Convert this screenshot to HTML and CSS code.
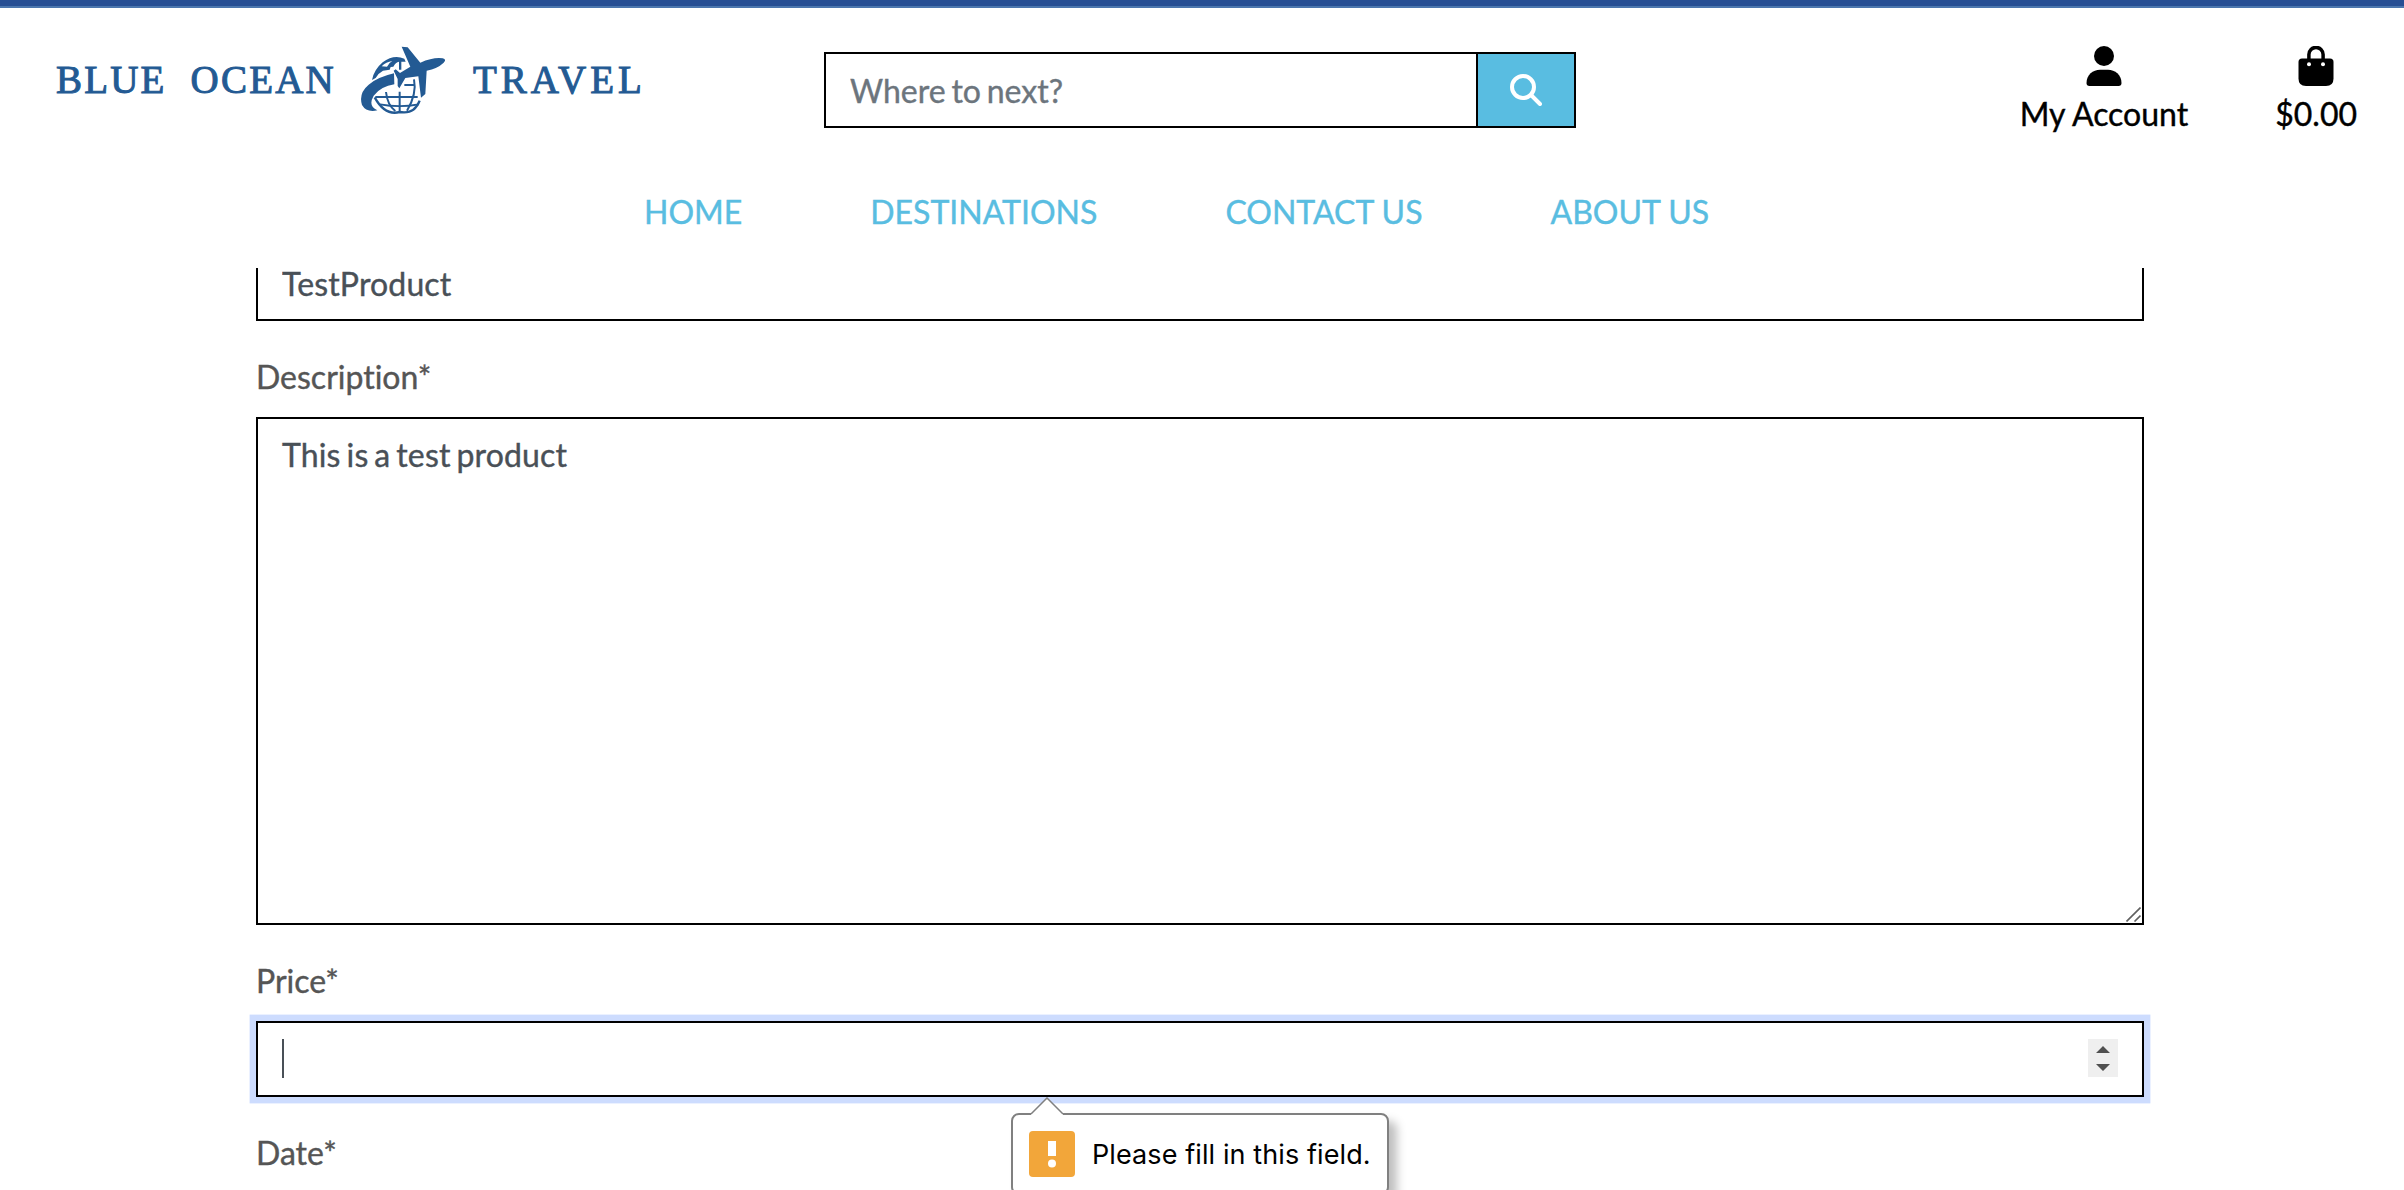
FILE: index.html
```
<!DOCTYPE html>
<html lang="en">
<head>
<meta charset="utf-8">
<title>Blue Ocean Travel</title>
<link rel="stylesheet" href="styles.css">
</head>
<body>
<header class="header">
  <div class="topbar">
    <a class="logo">
      <span class="logo-text logo-first">BLUE OCEAN</span>
      <svg class="logo-icon" viewBox="30 30 258 204" fill="#235a93">
        <path d="M155 32L173 34L211 80Q250 63 278 67Q291 70 281 80Q262 98 230 104L226 174L213 185L205 121L166 126L148 157L143 150L143 129L131 104L137 100L150 111L181 92Z"/>
        <path d="M66 132Q72 101 98 79Q131 54 163 68L167 77L154 77L154 101L147 101L147 77Q137 79 130 92L122 93L119 101L99 104Q84 112 77 126Z"/>
        <path d="M95 91L111 92Q117 80 127 75Q108 78 95 91Z" fill="#fff"/>
        <path d="M132 112L133 145Q93 151 71 179Q53 211 82 223Q49 230 36 207Q25 172 56 146Q84 123 132 112Z"/>
        <path d="M163 147H195M192 130Q201 174 171 224M76 183H203M108 168Q112 207 136 225M149 167V227" fill="none" stroke="#235a93" stroke-width="6"/>
        <path d="M74 184Q105 240 149 228Q193 236 209 194" fill="none" stroke="#235a93" stroke-width="7"/>
        <path d="M90 205Q149 216 206 205" fill="none" stroke="#235a93" stroke-width="5"/>
      </svg>
      <span class="logo-text logo-second">TRAVEL</span>
    </a>
    <form class="search">
      <input class="search-input" type="text" placeholder="Where to next?">
      <button class="search-button" type="button" aria-label="Search">
        <svg width="32" height="32" viewBox="0 0 32 32" fill="none" stroke="#fff" stroke-width="4" stroke-linecap="round"><circle cx="13" cy="13" r="11"/><path d="M21 21L30 30"/></svg>
      </button>
    </form>
    <div class="actions">
      <a class="action">
        <svg width="36" height="40" viewBox="0 0 36 40"><circle cx="18" cy="10" r="10"/><path d="M0.5 37C0.5 29 7 23.8 14 23.8H22C29 23.8 35.5 29 35.5 37Q35.5 40 32.5 40H3.5Q0.5 40 0.5 37Z"/></svg>
        <span>My Account</span>
      </a>
      <a class="action">
        <svg width="36" height="40" viewBox="0 0 36 40"><path d="M10.9 14V8.5A7.1 7.1 0 0 1 25.100 8.500V14" fill="none" stroke="#000" stroke-width="3.5"/><path d="M4 12.500H32Q35.500 12.500 35.500 16V32.500Q35.500 40 28 40H8Q0.500 40 0.500 32.500V16Q0.500 12.500 4 12.500Z"/><circle cx="11" cy="18.200" r="2" fill="#fff"/><circle cx="25" cy="18.200" r="2" fill="#fff"/></svg>
        <span>$0.00</span>
      </a>
    </div>
  </div>
  <nav class="nav">
    <a>HOME</a>
    <a>DESTINATIONS</a>
    <a>CONTACT US</a>
    <a>ABOUT US</a>
  </nav>
</header>
<main class="content">
  <form class="product-form">
    <input class="field" type="text" value="TestProduct">
    <label class="label">Description*</label>
    <div class="area-wrap">
      <textarea class="field area">This is a test product</textarea>
      <svg class="grip" width="15" height="15" viewBox="0 0 15 15" stroke="#606060" stroke-width="1.6"><path d="M0.500 14.500L14.500 0.500M8.500 14.500L14.500 8.500"/></svg>
    </div>
    <label class="label">Price*</label>
    <div class="field price">
      <span class="caret"></span>
      <svg class="spinner" width="30" height="38" viewBox="0 0 30 38"><path d="M0 0H30V38H0Z" fill="#efefef"/><path d="M8 14L15 7L22 14ZM8 25H22L15 32Z" fill="#505050"/></svg>
      <div class="tooltip">
        <svg class="tooltip-arrow" width="34" height="19" viewBox="0 0 34 19"><path d="M1 17L17 1L33 17V19H1Z" fill="#fff"/><path d="M1 17L17 1L33 17" fill="none" stroke="#808080" stroke-width="1.500"/></svg>
        <svg width="46" height="46" viewBox="0 0 46 46"><rect width="46" height="46" rx="4" fill="#f2a63a"/><path d="M19 10H27V25H19Z" fill="#fff"/><circle cx="23" cy="32.500" r="4" fill="#fff"/></svg>
        <span class="tooltip-text">Please fill in this field.</span>
      </div>
    </div>
    <label class="label">Date*</label>
  </form>
</main>
</body>
</html>
```
FILE: styles.css
```
* { box-sizing: border-box; }

body {
  margin: 0;
  height: 1190px;
  overflow: hidden;
  background: #fff;
  color: #555;
  font: 32px/48px Lato, sans-serif;
  font-variant-ligatures: none;
  -webkit-text-stroke: 0.4px currentColor;
}

.header {
  height: 268px;
  border-top: 6px solid #274f94;
}

.topbar {
  display: grid;
  grid-template-columns: 824px 752px 1fr;
  align-items: start;
  height: 158px;
  border-top: 2px solid #4c77ae;
}

.logo {
  display: flex;
  align-items: center;
  height: 70px;
  margin: 37px 0 0 56px;
  color: #235a93;
}

.logo-text {
  font: 39px/48px "Liberation Serif", serif;
  letter-spacing: 2.2px;
  word-spacing: 12px;
  white-space: nowrap;
  -webkit-text-stroke: 1px currentColor;
}

.logo-first { width: 304px; }
.logo-second { margin-left: 27px; letter-spacing: 4px; }

.logo-icon {
  width: 86px;
  height: 68px;
}

.search {
  display: flex;
  height: 76px;
  margin-top: 44px;
  border: 2px solid #000;
}

.search-input {
  flex: 1;
  min-width: 0;
  padding: 2px 24px 0;
  border: 0;
  border-right: 2px solid #000;
  outline: 0;
  background: #fff;
  font: inherit;
  word-spacing: -2.4px;
}

.search-input::placeholder { color: #6c757d; opacity: 1; }

.search-button {
  display: flex;
  align-items: center;
  justify-content: center;
  width: 96px;
  padding: 0;
  border: 0;
  background: #59bde1;
}

.actions {
  display: flex;
  justify-content: flex-end;
  gap: 87px;
  padding: 38px 47px 0 0;
  color: #000;
}

.action {
  display: flex;
  flex-direction: column;
  align-items: center;
  gap: 4px;
}

.nav {
  display: flex;
  gap: 128px;
  padding: 24px 0 0 644px;
  color: #59bde1;
}

.content {
  height: 922px;
  overflow: hidden;
}

.product-form {
  display: flex;
  flex-direction: column;
  width: 1888px;
  margin: -23px 0 0 256px;
}

.field {
  display: block;
  width: 100%;
  height: 76px;
  padding: 12px 24px;
  border: 2px solid #000;
  border-radius: 0;
  outline: 0;
  background: #fff;
  color: #495057;
  font: inherit;
  letter-spacing: 0.15px;
  word-spacing: -2.4px;
}

.label { margin: 32px 0 16px; }

.area-wrap {
  position: relative;
  height: 508px;
}

.area {
  height: 100%;
  resize: none;
}

.grip {
  position: absolute;
  right: 3px;
  bottom: 3px;
}

.price {
  position: relative;
  display: flex;
  align-items: center;
  justify-content: space-between;
  padding: 11px 24px 13px;
  box-shadow: 0 0 0 6.4px #cddcfe;
}

.caret {
  width: 2px;
  height: 39px;
  background: #495057;
}

.tooltip {
  position: absolute;
  left: 753px;
  top: 90px;
  display: flex;
  align-items: center;
  gap: 17px;
  width: 378px;
  height: 82px;
  padding-left: 16px;
  border: 2px solid #808080;
  border-radius: 8px;
  background: #fff;
  box-shadow: 8px 8px 10px rgba(0, 0, 0, 0.25);
  color: #000;
  font: 27px/36px Inter, sans-serif;
  letter-spacing: 0.1px;
  word-spacing: 0;
  white-space: nowrap;
  -webkit-text-stroke: 0;
}

.tooltip-text { padding-top: 2px; }

.tooltip-arrow {
  position: absolute;
  left: 17px;
  top: -18px;
}
```
